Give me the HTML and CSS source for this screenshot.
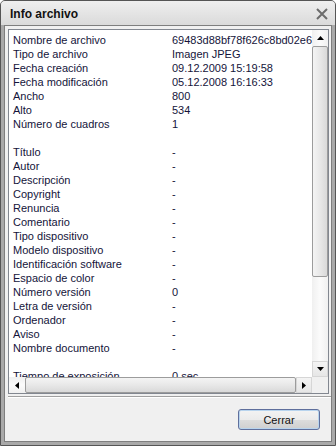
FILE: index.html
```html
<!DOCTYPE html>
<html>
<head>
<meta charset="utf-8">
<link rel="stylesheet" href="styles.css">
</head>
<body>
<div class="window">
  <div class="titlebar">
    <span class="title">Info archivo</span>
    <svg class="close" width="12" height="12" viewBox="0 0 12 12"><path d="M1 1 L11 11 M11 1 L1 11" stroke="#6c6c6c" stroke-width="2" fill="none"/></svg>
  </div>
  <div class="client">
    <div class="listbox">
      <div class="viewport">
        <table class="props">
          <tr><td class="k">Nombre de archivo</td><td class="v">69483d88bf78f626c8bd02e6c0ab7c3d.jpg</td></tr>
          <tr><td class="k">Tipo de archivo</td><td class="v">Imagen JPEG</td></tr>
          <tr><td class="k">Fecha creación</td><td class="v">09.12.2009 15:19:58</td></tr>
          <tr><td class="k">Fecha modificación</td><td class="v">05.12.2008 16:16:33</td></tr>
          <tr><td class="k">Ancho</td><td class="v">800</td></tr>
          <tr><td class="k">Alto</td><td class="v">534</td></tr>
          <tr><td class="k">Número de cuadros</td><td class="v">1</td></tr>
          <tr><td class="k">&nbsp;</td><td class="v"></td></tr>
          <tr><td class="k">Título</td><td class="v">-</td></tr>
          <tr><td class="k">Autor</td><td class="v">-</td></tr>
          <tr><td class="k">Descripción</td><td class="v">-</td></tr>
          <tr><td class="k">Copyright</td><td class="v">-</td></tr>
          <tr><td class="k">Renuncia</td><td class="v">-</td></tr>
          <tr><td class="k">Comentario</td><td class="v">-</td></tr>
          <tr><td class="k">Tipo dispositivo</td><td class="v">-</td></tr>
          <tr><td class="k">Modelo dispositivo</td><td class="v">-</td></tr>
          <tr><td class="k">Identificación software</td><td class="v">-</td></tr>
          <tr><td class="k">Espacio de color</td><td class="v">-</td></tr>
          <tr><td class="k">Número versión</td><td class="v">0</td></tr>
          <tr><td class="k">Letra de versión</td><td class="v">-</td></tr>
          <tr><td class="k">Ordenador</td><td class="v">-</td></tr>
          <tr><td class="k">Aviso</td><td class="v">-</td></tr>
          <tr><td class="k">Nombre documento</td><td class="v">-</td></tr>
          <tr><td class="k">&nbsp;</td><td class="v"></td></tr>
          <tr><td class="k">Tiempo de exposición</td><td class="v">0 sec</td></tr>
          <tr><td class="k">Número F</td><td class="v">-</td></tr>
        </table>
      </div>
      <div class="vscroll">
        <div class="sb-btn"><svg width="7" height="4" viewBox="0 0 7 4"><polygon points="3.5,0 7,4 0,4" fill="#000"/></svg></div>
        <div class="vthumb"></div>
        <div class="vtrack"></div>
        <div class="sb-btn boxed"><svg width="7" height="4" viewBox="0 0 7 4"><polygon points="0,0 7,0 3.5,4" fill="#000"/></svg></div>
      </div>
      <div class="hscroll">
        <div class="sb-btn"><svg width="4" height="7" viewBox="0 0 4 7"><polygon points="4,0 4,7 0,3.5" fill="#000"/></svg></div>
        <div class="hthumb"></div>
        <div class="sb-btn boxed"><svg width="4" height="7" viewBox="0 0 4 7"><polygon points="0,0 4,3.5 0,7" fill="#000"/></svg></div>
      </div>
      <div class="corner"></div>
    </div>
    <div class="separator"></div>
    <div class="footer">
      <button class="btn">Cerrar</button>
    </div>
  </div>
</div>
</body>
</html>
```

FILE: styles.css
```css
html, body {
  margin: 0;
  padding: 0;
  background: #ffffff;
}
.window {
  width: 336px;
  height: 446px;
  box-sizing: border-box;
  border: 1px solid #555555;
  border-radius: 5px 5px 0 0;
  background: #a9a9a9;
  padding: 0 3px 3px 3px;
  display: flex;
  flex-direction: column;
  font-family: "DejaVu Sans", "Liberation Sans", sans-serif;
  font-stretch: condensed;
}
.titlebar {
  height: 24px;
  margin: 0 -3px;
  padding: 0 7px 0 9px;
  display: flex;
  align-items: center;
  justify-content: space-between;
  background: linear-gradient(#efefef, #dadada);
  border-radius: 4px 4px 0 0;
}
.title {
  font-family: "Liberation Sans", Arial, sans-serif;
  font-weight: bold;
  font-size: 12px;
  color: #111111;
  padding-top: 2px;
}
.close {
  display: block;
  margin-top: 2px;
}
.client {
  flex: 1;
  border: 1px solid #7e7e7e;
  background: #f0f0f0;
  display: flex;
  flex-direction: column;
}
.listbox {
  margin: 3px 2px 0 3px;
  height: 365px;
  box-sizing: border-box;
  border: 1px solid #828790;
  background: #ffffff;
  display: grid;
  grid-template-columns: 1fr 16px;
  grid-template-rows: 1fr 16px;
}
.viewport {
  overflow: hidden;
  padding: 3px 0 0 4px;
}
.props {
  border-collapse: collapse;
  font-family: "Liberation Sans", Arial, sans-serif;
  font-size: 11px;
  color: #14143a;
  white-space: nowrap;
}
.props td {
  padding: 0;
  height: 14px;
  line-height: 14px;
}
.props .k {
  width: 159px;
  min-width: 159px;
}
.vscroll {
  display: flex;
  flex-direction: column;
  background: linear-gradient(to right, #f0f0f0, #fbfbfb, #f0f0f0);
}
.sb-btn {
  width: 16px;
  height: 16px;
  flex: none;
  display: flex;
  align-items: center;
  justify-content: center;
  box-sizing: border-box;
}
.sb-btn.boxed {
  border: 1px solid #d6d6d6;
  background: linear-gradient(#f4f4f4, #e6e6e6);
}
.vthumb {
  height: 231px;
  flex: none;
  box-sizing: border-box;
  border: 1px solid #9c9c9c;
  border-radius: 2px;
  background: linear-gradient(to right, #f4f4f4, #e8e8e8 50%, #d9d9d9);
}
.vtrack {
  flex: 1;
}
.hscroll {
  display: flex;
  background: linear-gradient(#f0f0f0, #fbfbfb, #f0f0f0);
}
.hthumb {
  flex: 1;
  box-sizing: border-box;
  border: 1px solid #9c9c9c;
  border-radius: 2px;
  background: linear-gradient(#f4f4f4, #e8e8e8 50%, #d9d9d9);
}
.corner {
  background: #f0f0f0;
}
.separator {
  margin: 2px 0 0 3px;
  height: 1px;
  border-top: 1px solid #a0a0a0;
  background: #ffffff;
}
.footer {
  display: flex;
  justify-content: flex-end;
  padding: 11px 11px 0 0;
}
.btn {
  width: 82px;
  height: 21px;
  margin: 0;
  padding: 0;
  border: 1px solid #5f6f9c;
  border-radius: 3px;
  background: linear-gradient(#f3f3f3 0%, #ebebeb 50%, #dddddd 51%, #cfcfcf 100%);
  box-shadow: inset 0 0 0 1px #b8d4ee;
  font-family: "Liberation Sans", Arial, sans-serif;
  font-size: 11px;
  color: #111111;
}
```
